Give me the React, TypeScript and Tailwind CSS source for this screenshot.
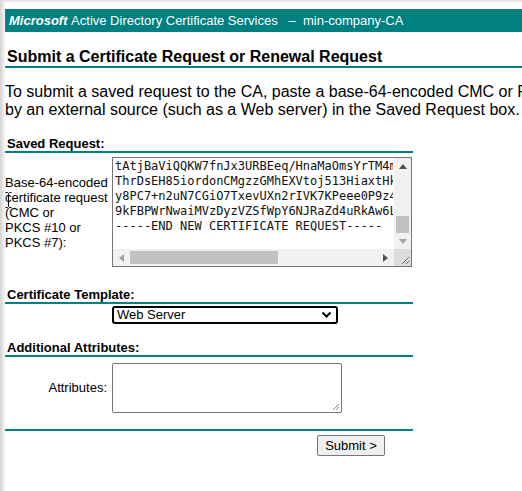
import React from "react";

function Rule({ full }: { full?: boolean }) {
  return <div className={full ? "h-[2px] bg-[#008080]" : "h-[2px] w-[408px] bg-[#008080]"} />;
}

function Arrow({ dir, color }: { dir: "up" | "down" | "left" | "right"; color: string }) {
  const pts: Record<string, string> = {
    up: "4,1 8,6 0,6",
    down: "0,1 8,1 4,6",
    left: "6,0 6,8 1,4",
    right: "1,0 1,8 6,4",
  };
  const w = dir === "up" || dir === "down" ? 8 : 7;
  const h = dir === "up" || dir === "down" ? 7 : 8;
  return (
    <svg width={w} height={h} viewBox={`0 0 ${w} ${h}`}>
      <polygon points={pts[dir]} fill={color} />
    </svg>
  );
}

export default function App() {
  const lines = [
    "MIIEaDCCA1ACAQAwgZ0xCzAJBgNVBAYTAlNFMRIwEAYDVgg",
    "tAtjBaViQQKW7fnJx3URBEeq/HnaMaOmsYrTM4mQ",
    "ThrDsEH85iordonCMgzzGMhEXVtoj513HiaxtHkP",
    "y8PC7+n2uN7CGiO7TxevUXn2rIVK7KPeee0P9z4a",
    "9kFBPWrNwaiMVzDyzVZSfWpY6NJRaZd4uRkAw6Ld",
    "-----END NEW CERTIFICATE REQUEST-----",
  ];
  return (
    <div className="relative w-[522px] h-[491px] overflow-hidden bg-white font-['Liberation_Sans',Arial,sans-serif] text-black">
      <div className="pointer-events-none absolute left-0 top-0 h-full w-[6px] bg-gradient-to-r from-[#d2d2d2] to-white/0" />
      <div className="pointer-events-none absolute left-0 top-0 w-full h-[3px] bg-gradient-to-b from-[#dcdcdc] to-white/0" />
      <div className="pl-[5px] pt-[9px]">
        <div className="h-[23px] bg-[#008080] flex items-center pl-[4px] text-white text-[13px] whitespace-nowrap">
          <span className="font-bold italic">Microsoft</span>
          <span>&nbsp;Active Directory Certificate Services&nbsp;&nbsp;&nbsp;&ndash;&nbsp; min-company-CA</span>
        </div>
        <div className="mt-[16px] h-[18px] leading-[18px] text-[16px] font-bold pl-[2px] whitespace-nowrap">
          Submit a Certificate Request or Renewal Request
        </div>
        <Rule full />
        <div className="mt-[15px] text-[16px] leading-[18px] whitespace-nowrap">
          <div>To submit a saved request to the CA, paste a base-64-encoded CMC or PKCS #10 certificate request or PKCS #7 renewal request generated</div>
          <div>by an external source (such as a Web server) in the Saved Request box.</div>
        </div>

        <div className="mt-[17px] h-[15px] leading-[15px] text-[13px] font-bold pl-[2px]">Saved Request:</div>
        <Rule />
        <div className="mt-[4px] flex items-center">
          <div className="w-[107px] text-[13px] leading-[15px]">
            <div>Base-64-encoded</div>
            <div>certificate request</div>
            <div>(CMC or</div>
            <div>PKCS #10 or</div>
            <div>PKCS #7):</div>
          </div>
          <div className="relative w-[300px] h-[110px] border border-[#767676] overflow-hidden bg-white">
            <div className="absolute left-[2px] top-[-14px] w-[278px] overflow-hidden font-['DejaVu_Sans_Mono',monospace] text-[12px] leading-[15px] text-[#111] whitespace-pre">
              {lines.map((l, i) => (
                <div key={i}>{l}</div>
              ))}
            </div>
            <div className="absolute right-0 top-0 w-[17px] h-[92px] bg-[#f1f1f1] flex flex-col">
              <div className="h-[17px] flex items-center justify-center">
                <Arrow dir="up" color="#505050" />
              </div>
              <div className="flex-1 relative">
                <div className="absolute left-[2px] right-[2px] top-[41px] h-[17px] bg-[#c1c1c1]" />
              </div>
              <div className="h-[17px] flex items-center justify-center">
                <Arrow dir="down" color="#a3a3a3" />
              </div>
            </div>
            <div className="absolute left-0 bottom-0 w-[281px] h-[17px] bg-[#f1f1f1] flex">
              <div className="w-[17px] flex items-center justify-center">
                <Arrow dir="left" color="#a3a3a3" />
              </div>
              <div className="flex-1 relative">
                <div className="absolute top-[2px] bottom-[2px] left-[0px] w-[148px] bg-[#c1c1c1]" />
              </div>
              <div className="w-[17px] flex items-center justify-center">
                <Arrow dir="right" color="#505050" />
              </div>
            </div>
            <div className="absolute right-0 bottom-0 w-[17px] h-[17px] bg-[#dcdcdc]">
              <svg width="17" height="17" viewBox="0 0 17 17" className="absolute inset-0">
                <line x1="15" y1="8" x2="8" y2="15" stroke="#6a6a6a" strokeWidth="1" />
                <line x1="15" y1="12" x2="12" y2="15" stroke="#6a6a6a" strokeWidth="1" />
              </svg>
            </div>
          </div>
        </div>

        <div className="mt-[20px] h-[15px] leading-[15px] text-[13px] font-bold pl-[2px]">Certificate Template:</div>
        <Rule />
        <div className="mt-[2px] flex">
          <div className="w-[107px]" />
          <div className="w-[226px] h-[18px] border-2 border-black rounded-[3px] flex items-center justify-between pl-[3px] pr-[4px] text-[13px]">
            <span>Web Server</span>
            <svg width="11" height="8" viewBox="0 0 11 8">
              <polyline points="1.5,1.5 5.5,5.5 9.5,1.5" fill="none" stroke="#000" strokeWidth="2" />
            </svg>
          </div>
        </div>

        <div className="mt-[16px] h-[15px] leading-[15px] text-[13px] font-bold pl-[2px]">Additional Attributes:</div>
        <Rule />
        <div className="mt-[6px] flex items-center">
          <div className="w-[107px] text-[13px] text-right pr-[5px]">Attributes:</div>
          <div className="relative w-[230px] h-[50px] border border-[#767676] rounded-[2px] bg-white">
            <svg width="9" height="9" viewBox="0 0 9 9" className="absolute right-[1px] bottom-[1px]">
              <line x1="8" y1="2" x2="2" y2="8" stroke="#8a8a8a" strokeWidth="1" />
              <line x1="8" y1="5" x2="5" y2="8" stroke="#8a8a8a" strokeWidth="1" />
            </svg>
          </div>
        </div>

        <div className="mt-[16px]">
          <Rule />
        </div>
        <div className="mt-[4px] flex">
          <div className="w-[312px]" />
          <button className="w-[68px] h-[21px] bg-[#efefef] border border-[#767676] rounded-[2px] text-[13px] leading-[19px] text-black font-['Liberation_Sans',Arial,sans-serif]">
            Submit &gt;
          </button>
        </div>
      </div>
      <svg className="absolute left-[5px] top-[192px]" width="7" height="16" viewBox="0 0 7 16">
        <path d="M0.5,0.5 H2.5 L3.5,1.5 L4.5,0.5 H6.5 M3.5,1.5 V14.5 M0.5,15.5 H2.5 L3.5,14.5 L4.5,15.5 H6.5" fill="none" stroke="#000" strokeWidth="1" />
      </svg>
    </div>
  );
}
